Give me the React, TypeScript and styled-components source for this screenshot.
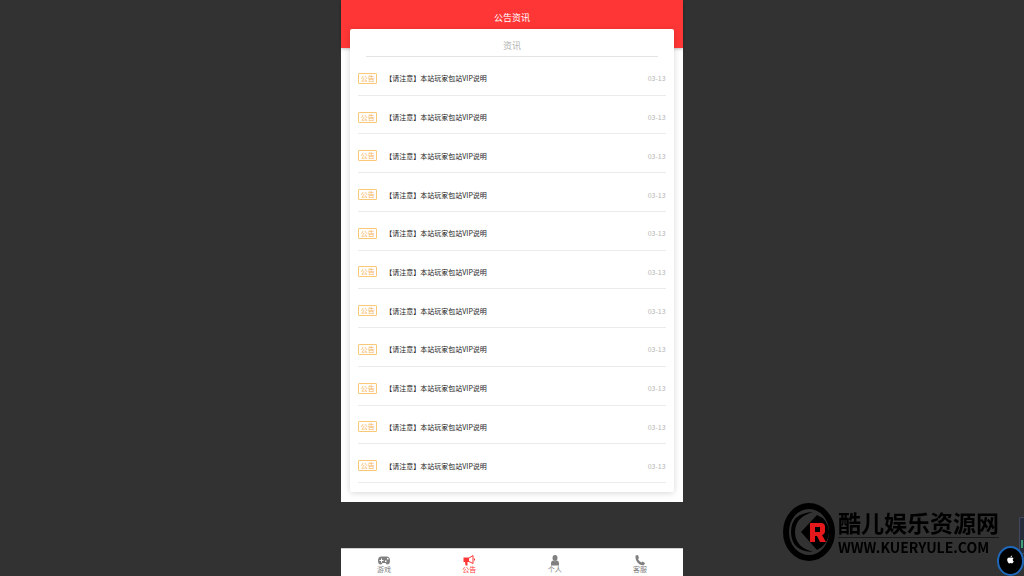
import React from 'react';
import styled, { createGlobalStyle } from 'styled-components';
import { FaApple } from 'react-icons/fa';

const GlobalStyle = createGlobalStyle`
  * { box-sizing: border-box; }
  body {
    margin: 0;
    background: #323232;
    font-family: "Noto Sans CJK SC", "Noto Sans", sans-serif;
    font-weight: 400;
  }
`;

const Page = styled.div`
  width: calc(100% / 3);
  margin: 0 auto;
  padding-bottom: 74px;
`;

const Content = styled.main`
  background: #fff;
  padding-bottom: 10px;
`;

const Header = styled.header`
  height: 48px;
  padding-top: 11px;
  background: #ff3636;
  box-shadow: 0 1px 3px rgba(0, 0, 0, 0.25);
`;

const PageTitle = styled.h1`
  margin: 0;
  font-size: 9px;
  line-height: 14px;
  font-weight: 400;
  text-align: center;
  color: #fff;
`;

const Card = styled.section`
  position: relative;
  margin: -19px 9px 0;
  padding: 0 8px 9px;
  background: #fff;
  border-radius: 2px;
  box-shadow: 0 1px 6px rgba(0, 0, 0, 0.16);
`;

const CardTitle = styled.h2`
  margin: 0 8px;
  height: 28px;
  padding-top: 10px;
  border-bottom: 1px solid #e4e4e4;
  font-size: 9px;
  line-height: 14px;
  font-weight: 400;
  text-align: center;
  color: #b4b4b4;
`;

const List = styled.ul`
  list-style: none;
  margin: 0;
  padding: 0;
  display: grid;
  grid-auto-rows: 1fr;
  min-height: 426px;
`;

const Row = styled.li`
  border-bottom: 1px solid #ebebeb;
  padding-top: 5px;
`;

const RowLink = styled.a`
  display: flex;
  align-items: center;
  height: 100%;
  text-decoration: none;
  font-size: 7px;
  line-height: 10px;
  color: #222;
`;

const Tag = styled.span`
  width: 19px;
  height: 11px;
  border: 1px solid #f9c978;
  border-radius: 1px;
  line-height: 9px;
  text-align: center;
  color: #f7b356;
`;

const RowTitle = styled.span`
  flex: 1;
  margin-left: 8px;
  white-space: nowrap;
`;

const RowDate = styled.time`
  color: #b4b4b4;
`;

const TabBar = styled.nav`
  position: fixed;
  left: 0;
  right: 0;
  bottom: 0;
  width: calc(100% / 3);
  margin: 0 auto;
  height: 28px;
  display: flex;
  background: #fff;
  border-top: 1px solid #d0d0d0;
`;

const Tab = styled.a<{ $active?: boolean }>`
  flex: 1;
  display: flex;
  flex-direction: column;
  align-items: center;
  padding-top: 6px;
  font-size: 7px;
  line-height: 7px;
  text-decoration: none;
  color: ${(p) => (p.$active ? '#ff3636' : '#808080')};

  svg {
    display: block;
    width: 12px;
    height: 11px;
  }
`;

const Watermark = styled.aside`
  position: fixed;
  right: 25px;
  bottom: 14px;
  display: flex;
  align-items: center;
  color: #000;
`;

const Emblem = styled.svg`
  width: 52px;
  height: 60px;
`;

const WatermarkText = styled.div`
  margin-left: 3px;
  width: 161px;
  font-weight: 700;
  white-space: nowrap;
`;

const SiteName = styled.div`
  font-size: 23px;
  line-height: 30px;
`;

const SiteAddress = styled.div`
  border-top: 1px solid #171717;
  font-size: 14px;
  line-height: 19px;
`;

const SidePanel = styled.div`
  position: fixed;
  right: 0;
  bottom: 22px;
  width: 5px;
  height: 37px;
  display: flex;
  align-items: flex-end;
  justify-content: center;
  padding-bottom: 5px;
  background: #272c3b;
  border: 1px solid #414860;
  border-right: 0;
  border-radius: 2px 0 0 2px;
`;

const Meter = styled.div`
  width: 2px;
  height: 8px;
  background: #3c9d78;
`;

const FloatButton = styled.button`
  position: fixed;
  right: 0;
  bottom: 0;
  width: 27px;
  height: 30px;
  padding: 0 0 3px;
  display: flex;
  align-items: center;
  justify-content: center;
  background: #000;
  border: 2px solid #2068ba;
  border-radius: 50%;
  color: #fff;
  font-size: 9px;
`;

const Gamepad = () => (
  <svg viewBox="0 0 24 22" aria-hidden="true">
    <path
      d="M7 3H17Q24 3 24 11Q24 19 19 19Q17 19 15 16H9Q7 19 5 19Q0 19 0 11Q0 3 7 3ZM6 7V10H3V12H6V15H8V12H11V10H8V7ZM18 6V9H21V6ZM14 11V14H17V11Z"
      fill="currentColor"
      fillRule="evenodd"
    />
  </svg>
);

const Megaphone = () => (
  <svg viewBox="0 0 24 22" aria-hidden="true">
    <path d="M1 5h11v9H9v7H5l-1-7H1z" fill="currentColor" />
    <path d="M12 6l8-5v16l-8-4" fill="none" stroke="currentColor" strokeWidth="2" />
    <path d="M23 7v4" stroke="currentColor" strokeWidth="2" />
  </svg>
);

const Person = () => (
  <svg viewBox="0 0 24 22" aria-hidden="true">
    <ellipse cx="12" cy="6" rx="5" ry="6" fill="currentColor" />
    <path d="M4 21v-5q0-4 4-5 4 3 8 0 4 1 4 5v5z" fill="currentColor" />
  </svg>
);

const Phone = () => (
  <svg viewBox="0 0 24 22" aria-hidden="true">
    <path
      d="M3 1L8 0L10 6L8 8Q10 12 15 15L17 13L22 16L20 20Q17 22 10 18Q2 12 3 1Z"
      fill="currentColor"
    />
  </svg>
);

const notices = Array.from({ length: 11 }, (_, id) => ({
  id,
  title: '【请注意】本站玩家包站VIP说明',
  date: '03-13',
}));

export default function App() {
  return (
    <>
      <GlobalStyle />
      <Page>
        <Content>
          <Header>
            <PageTitle>公告资讯</PageTitle>
          </Header>
          <Card>
            <CardTitle>资讯</CardTitle>
            <List>
              {notices.map((n) => (
                <Row key={n.id}>
                  <RowLink href="#">
                    <Tag>公告</Tag>
                    <RowTitle>{n.title}</RowTitle>
                    <RowDate>{n.date}</RowDate>
                  </RowLink>
                </Row>
              ))}
            </List>
          </Card>
        </Content>
      </Page>
      <TabBar>
        <Tab href="#"><Gamepad />游戏</Tab>
        <Tab href="#" $active><Megaphone />公告</Tab>
        <Tab href="#"><Person />个人</Tab>
        <Tab href="#"><Phone />客服</Tab>
      </TabBar>
      <Watermark>
        <Emblem viewBox="0 0 52 60" aria-hidden="true">
          <ellipse cx="26" cy="30" rx="23" ry="26" fill="none" stroke="#000" strokeWidth="6" />
          <path d="M30 10Q8 11 8 30Q8 49 30 50Q12 45 12 30Q12 15 30 10Z" fill="#000" />
          <path d="M34 13L18 30L34 48Q45 43 46 30Q45 17 34 13Z" fill="#000" />
          <path d="M27 21H38Q42 21 42 25V29Q42 32 39 33L43 40H37L34 34H32V40H27ZM32 25V30H37V25Z" fill="#e5191c" fillRule="evenodd" />
        </Emblem>
        <WatermarkText>
          <SiteName>酷儿娱乐资源网</SiteName>
          <SiteAddress>WWW.KUERYULE.COM</SiteAddress>
        </WatermarkText>
      </Watermark>
      <SidePanel><Meter /></SidePanel>
      <FloatButton type="button" aria-label="Apple"><FaApple /></FloatButton>
    </>
  );
}
